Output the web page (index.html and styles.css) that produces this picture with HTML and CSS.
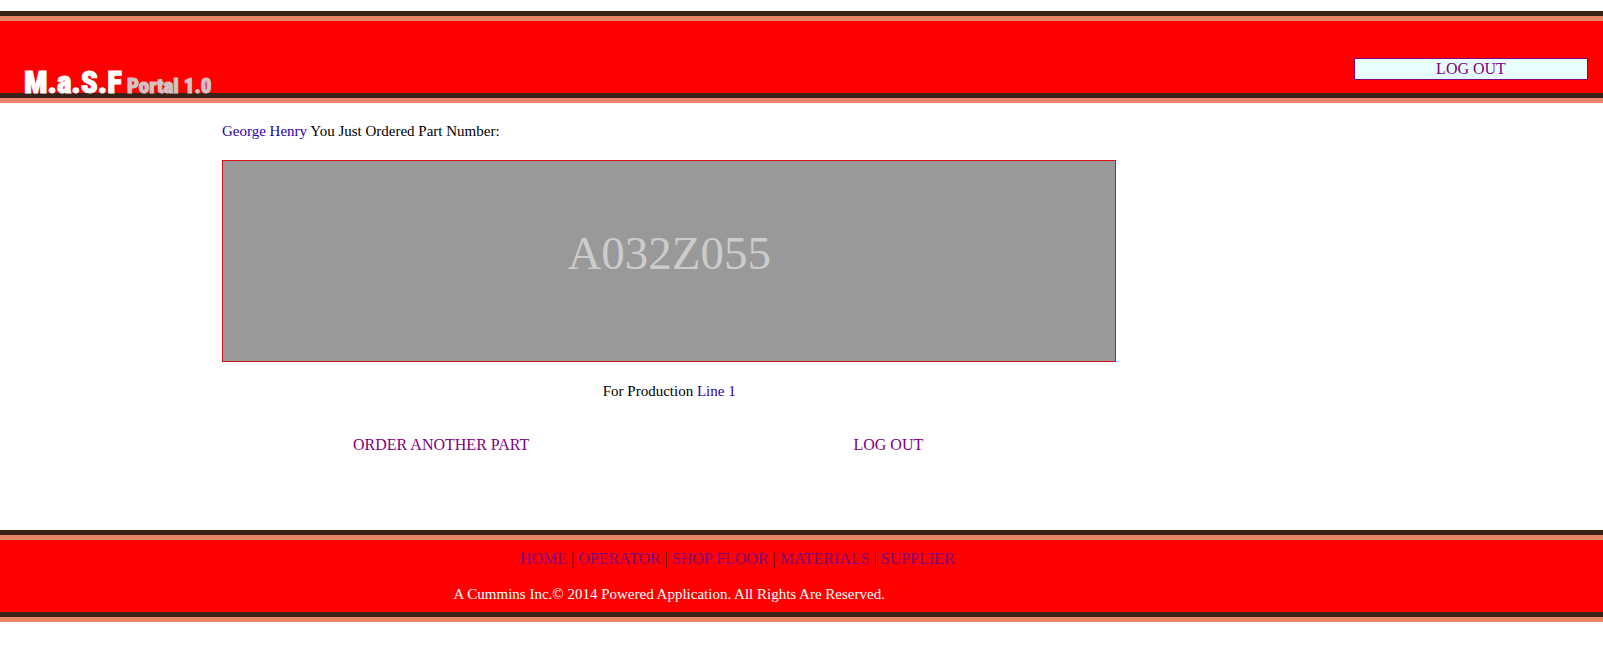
FILE: index.html
```html
<!DOCTYPE html>
<html lang="en">
<head>
<meta charset="utf-8">
<title>M.a.S.F Portal 1.0</title>
<link rel="stylesheet" href="styles.css">
</head>
<body>
<header class="band">
  <div class="masthead">
    <h1 class="brand">M.a.S.F <span class="brand-sub">Portal 1.0</span></h1>
    <a class="logout" href="#">LOG OUT</a>
  </div>
</header>
<main class="column content">
  <p><span class="value">George Henry</span> You Just Ordered Part Number:</p>
  <div class="part">A032Z055</div>
  <p class="line">For Production <span class="value">Line 1</span></p>
  <nav class="actions">
    <a href="#">ORDER ANOTHER PART</a>
    <a href="#">LOG OUT</a>
  </nav>
</main>
<footer class="band">
  <div class="column foot">
    <nav class="links"><a href="#">HOME</a> | <a href="#">OPERATOR</a> | <a href="#">SHOP FLOOR</a> | <a href="#">MATERIALS</a> | <a href="#">SUPPLIER</a></nav>
    <p class="copyright">A Cummins Inc.© 2014 Powered Application. All Rights Are Reserved.</p>
  </div>
</footer>
</body>
</html>
```

FILE: styles.css
```css
* { box-sizing: border-box; }

body {
  margin: 0;
  padding: 11px 0 27px;
  background: #fff;
  color: #000;
  font: 16px/18px "Liberation Serif", "Times New Roman", serif;
}

p { margin: 0; font-size: 15px; }

a { color: #800080; text-decoration: none; }

.band {
  background: #f00;
  border-top: 5px solid #3b2217;
  border-bottom: 5px solid #e9866a;
}

.band::before,
.band::after {
  content: "";
  display: block;
  height: 5px;
  background: #e9866a;
}

.band::after { background: #3b2217; }

.masthead {
  display: flex;
  justify-content: space-between;
  align-items: center;
  height: 72px;
  padding: 24px 15px 0 24px;
}

.brand {
  display: flex;
  align-items: baseline;
  align-self: flex-end;
  gap: 5px;
  margin: 0;
  color: #fff;
  font: 900 31px/14px Impact, "Roboto Condensed", "Liberation Sans", sans-serif;
  -webkit-text-stroke: 1px;
}

.brand-sub { color: #d3c4c4; font-size: 21px; }

.logout {
  width: 15%;
  min-width: 120px;
  max-width: 234px;
  padding: 1px;
  border: 1px solid #800080;
  background: #e8fdfd;
  text-align: center;
}

.column { width: 55.8%; margin-left: 13.85%; }

.content { padding: 19px 0 76px; }

.value { color: #2a00a8; }

.part {
  display: flex;
  align-items: center;
  justify-content: center;
  margin: 20px 0;
  padding: 65px 0 81px;
  border: 1px solid #d8101c;
  background: #999;
  color: #ccc;
  font-size: 47px;
  line-height: 54px;
}

.line { text-align: center; }

.actions {
  display: grid;
  grid-template-columns: 49fr 51fr;
  margin-top: 36px;
  text-align: center;
}

.foot { padding: 10px 0 9px; text-align: center; }

.links { padding-left: 136px; color: #501010; white-space: nowrap; }

.copyright { margin-top: 17px; color: #fff; }
```
